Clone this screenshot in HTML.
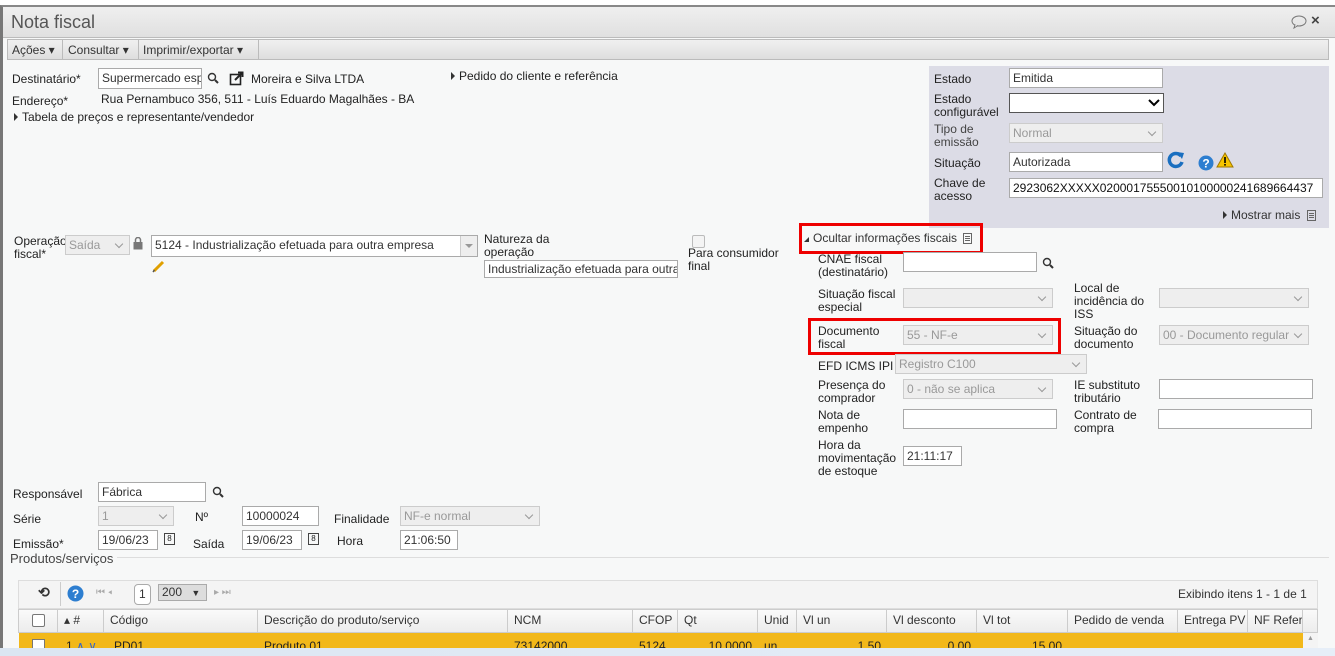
<!DOCTYPE html>
<html><head><meta charset="utf-8"><style>
*{box-sizing:border-box}
body{margin:0;width:1335px;height:656px;overflow:hidden;background:#fff;font-family:"Liberation Sans",sans-serif;font-size:12px;color:#222;position:relative}
.a{position:absolute;white-space:nowrap}
.in{position:absolute;height:20px;border:1px solid #aaa;background:#fff;padding:1px 3px;font-size:12px;line-height:16px;white-space:nowrap;overflow:hidden;color:#333}
.dis{background:#eee;border-color:#ccc;color:#999}
.sel::after{content:"";position:absolute;right:7px;top:5px;width:5px;height:5px;border-right:1.5px solid #999;border-bottom:1.5px solid #999;transform:rotate(45deg)}
.lbl{position:absolute;line-height:13px;color:#222}
.tri{display:inline-block;width:0;height:0;border-left:4px solid #333;border-top:4px solid transparent;border-bottom:4px solid transparent;margin-right:4px}
.red{position:absolute;border:3px solid #e00}
.th{position:absolute;top:609px;height:23px;border-right:1px solid #ccc;line-height:23px;padding-left:6px;color:#333;white-space:nowrap;overflow:hidden}
.td{position:absolute;top:633px;height:15px;line-height:26px;padding:0 6px;color:#222;overflow:hidden;white-space:nowrap}
.doc{display:inline-block;width:9px;height:11px;border:1px solid #666;vertical-align:-2px;margin-left:3px;background:linear-gradient(#666,#666) 1px 2px/5px 1px no-repeat,linear-gradient(#666,#666) 1px 4px/5px 1px no-repeat,linear-gradient(#666,#666) 1px 6px/5px 1px no-repeat}
</style></head><body>
<div class="a" style="left:0;top:5px;width:1335px;height:651px;border-left:3px solid #777;border-top:2px solid #888;background:#f7f8f8"></div>
<div class="a" style="left:3px;top:7px;width:1332px;height:31px;background:linear-gradient(#efefef,#e0e0e0);border-bottom:1px solid #bbb"></div>
<div class="a" style="left:11px;top:12px;font-size:18px;color:#555">Nota fiscal</div>
<svg class="a" style="left:1290px;top:15px" width="18" height="14" viewBox="0 0 18 14"><ellipse cx="9" cy="6" rx="7" ry="5" fill="none" stroke="#777"/><path d="M5 10 L4 13 L8 10.5" fill="#fff" stroke="#777"/></svg>
<div class="a" style="left:1311px;top:12px;font-size:15px;font-weight:bold;color:#444">×</div>
<div class="a" style="left:7px;top:39px;width:1322px;height:21px;background:linear-gradient(#f0f0f0,#dedede);border:1px solid #bbb"></div>
<div class="a" style="left:12px;top:43px;color:#333">Ações ▾</div>
<div class="a" style="left:62px;top:40px;width:1px;height:19px;background:#bbb"></div>
<div class="a" style="left:68px;top:43px;color:#333">Consultar ▾</div>
<div class="a" style="left:138px;top:40px;width:1px;height:19px;background:#bbb"></div>
<div class="a" style="left:143px;top:43px;color:#333">Imprimir/exportar ▾</div>
<div class="a" style="left:258px;top:40px;width:1px;height:19px;background:#bbb"></div>
<div class="a" style="left:12px;top:72px">Destinatário*</div>
<div class="in" style="left:98px;top:68px;width:104px;height:21px">Supermercado esp</div>
<svg class="a" style="left:207px;top:72px" width="13" height="13"><circle cx="5" cy="5" r="3.5" fill="none" stroke="#333" stroke-width="1.4"/><path d="M8 8 L11 11" stroke="#333" stroke-width="2"/></svg>
<svg class="a" style="left:229px;top:71px" width="15" height="15"><rect x="1.5" y="3.5" width="10" height="10" fill="none" stroke="#222" stroke-width="1.6"/><path d="M6 9 L13 2 M9 1.5 H13.5 V6" stroke="#222" stroke-width="2" fill="none"/></svg>
<div class="a" style="left:251px;top:72px">Moreira e Silva LTDA</div>
<div class="a" style="left:451px;top:69px"><span class="tri"></span>Pedido do cliente e referência</div>
<div class="a" style="left:12px;top:94px">Endereço*</div>
<div class="a" style="left:101px;top:92px">Rua Pernambuco 356, 511 - Luís Eduardo Magalhães - BA</div>
<div class="a" style="left:14px;top:110px"><span class="tri"></span>Tabela de preços e representante/vendedor</div>
<div class="a" style="left:929px;top:66px;width:400px;height:162px;background:#dcdce6"></div>
<div class="a" style="left:934px;top:72px">Estado</div>
<div class="in" style="left:1009px;top:68px;width:154px">Emitida</div>
<div class="lbl" style="left:934px;top:93px">Estado<br>configurável</div>
<div class="in" style="left:1009px;top:93px;width:155px;border-color:#555"></div>
<svg class="a" style="left:1148px;top:99px" width="12" height="8"><path d="M1 1 L6 6 L11 1" stroke="#000" stroke-width="2" fill="none"/></svg>
<div class="lbl" style="left:934px;top:123px;color:#444">Tipo de<br>emissão</div>
<div class="in dis sel" style="left:1009px;top:123px;width:154px">Normal</div>
<div class="a" style="left:934px;top:156px">Situação</div>
<div class="in" style="left:1009px;top:152px;width:154px">Autorizada</div>
<svg class="a" style="left:1167px;top:151px" width="18" height="18" viewBox="0 0 18 18"><path d="M14 5 A6.5 6.5 0 1 0 15 11" stroke="#1a6fc0" stroke-width="3.5" fill="none"/><path d="M10 1 L17 2 L15 8Z" fill="#1a6fc0"/></svg>
<svg class="a" style="left:1198px;top:155px" width="16" height="16"><circle cx="8" cy="8" r="7.5" fill="#2d7ed0"/><text x="8" y="12.5" text-anchor="middle" font-size="12" font-weight="bold" fill="#fff" font-family="Liberation Sans">?</text></svg>
<svg class="a" style="left:1216px;top:152px" width="18" height="16"><path d="M9 1 L17 15 H1Z" fill="#f5c400" stroke="#a07800"/><rect x="8.2" y="5" width="1.6" height="6" fill="#000"/><rect x="8.2" y="12" width="1.6" height="1.6" fill="#000"/></svg>
<div class="lbl" style="left:934px;top:177px">Chave de<br>acesso</div>
<div class="in" style="left:1009px;top:178px;width:314px;color:#111">2923062XXXXX02000175550010100000241689664437</div>
<div class="a" style="left:1223px;top:208px;color:#333"><span class="tri"></span>Mostrar mais <span class="doc"></span></div>
<div class="lbl" style="left:14px;top:235px">Operação<br>fiscal*</div>
<div class="in dis sel" style="left:65px;top:235px;width:65px">Saída</div>
<svg class="a" style="left:133px;top:237px" width="10" height="13"><rect x="0.5" y="5" width="9" height="7.5" fill="#777"/><path d="M2.5 5 V3 A2.5 2.5 0 0 1 7.5 3 V5" stroke="#777" stroke-width="1.5" fill="none"/></svg>
<div class="in" style="left:151px;top:235px;width:327px;height:22px">5124 - Industrialização efetuada para outra empresa</div>
<div class="a" style="left:460px;top:236px;width:17px;height:20px;background:#eee;border-left:1px solid #ccc"></div>
<div class="a" style="left:465px;top:244px;border-left:4px solid transparent;border-right:4px solid transparent;border-top:4px solid #999"></div>
<svg class="a" style="left:152px;top:259px" width="14" height="14"><path d="M2 12 L11 3" stroke="#e0a000" stroke-width="3"/><path d="M1 13 L2.5 11" stroke="#555" stroke-width="1.5"/></svg>
<div class="lbl" style="left:484px;top:233px">Natureza da<br>operação</div>
<div class="in" style="left:484px;top:260px;width:194px;height:18px;line-height:14px">Industrialização efetuada para outra</div>
<div class="a" style="left:692px;top:235px;width:13px;height:13px;border:1px solid #bbb;border-radius:2px;background:#f4f4f4"></div>
<div class="lbl" style="left:688px;top:247px">Para consumidor<br>final</div>
<div class="a" style="left:804px;top:231px;color:#333"><span style="display:inline-block;border-left:5px solid transparent;border-bottom:5px solid #333;margin-right:4px"></span>Ocultar informações fiscais <span class="doc"></span></div>
<div class="red" style="left:799px;top:223px;width:184px;height:31px"></div>
<div class="lbl" style="left:818px;top:253px">CNAE fiscal<br>(destinatário)</div>
<div class="in" style="left:903px;top:252px;width:134px"></div>
<svg class="a" style="left:1042px;top:257px" width="13" height="13"><circle cx="5" cy="5" r="3.5" fill="none" stroke="#333" stroke-width="1.4"/><path d="M8 8 L11 11" stroke="#333" stroke-width="2"/></svg>
<div class="lbl" style="left:818px;top:288px">Situação fiscal<br>especial</div>
<div class="in dis sel" style="left:903px;top:288px;width:150px"></div>
<div class="lbl" style="left:1074px;top:282px">Local de<br>incidência do<br>ISS</div>
<div class="in dis sel" style="left:1159px;top:288px;width:150px"></div>
<div class="lbl" style="left:818px;top:325px">Documento<br>fiscal</div>
<div class="in dis sel" style="left:903px;top:325px;width:150px">55 - NF-e</div>
<div class="red" style="left:808px;top:318px;width:253px;height:37px"></div>
<div class="lbl" style="left:1074px;top:325px">Situação do<br>documento</div>
<div class="in dis sel" style="left:1159px;top:325px;width:150px">00 - Documento regular</div>
<div class="a" style="left:818px;top:359px">EFD ICMS IPI</div>
<div class="in dis sel" style="left:895px;top:354px;width:192px">Registro C100</div>
<div class="lbl" style="left:818px;top:379px">Presença do<br>comprador</div>
<div class="in dis sel" style="left:903px;top:379px;width:150px">0 - não se aplica</div>
<div class="lbl" style="left:1074px;top:379px">IE substituto<br>tributário</div>
<div class="in" style="left:1159px;top:379px;width:154px"></div>
<div class="lbl" style="left:818px;top:409px">Nota de<br>empenho</div>
<div class="in" style="left:903px;top:409px;width:154px"></div>
<div class="lbl" style="left:1074px;top:409px">Contrato de<br>compra</div>
<div class="in" style="left:1158px;top:409px;width:154px"></div>
<div class="lbl" style="left:818px;top:439px">Hora da<br>movimentação<br>de estoque</div>
<div class="in" style="left:903px;top:446px;width:59px">21:11:17</div>
<div class="a" style="left:13px;top:487px">Responsável</div>
<div class="in" style="left:98px;top:482px;width:108px">Fábrica</div>
<svg class="a" style="left:212px;top:486px" width="13" height="13"><circle cx="5" cy="5" r="3.5" fill="none" stroke="#333" stroke-width="1.4"/><path d="M8 8 L11 11" stroke="#333" stroke-width="2"/></svg>
<div class="a" style="left:13px;top:512px">Série</div>
<div class="in dis sel" style="left:98px;top:506px;width:76px">1</div>
<div class="a" style="left:195px;top:510px">Nº</div>
<div class="in" style="left:242px;top:506px;width:77px">10000024</div>
<div class="a" style="left:334px;top:512px">Finalidade</div>
<div class="in dis sel" style="left:400px;top:506px;width:140px">NF-e normal</div>
<div class="a" style="left:13px;top:537px">Emissão*</div>
<div class="in" style="left:98px;top:530px;width:60px">19/06/23</div>
<div class="a" style="left:164px;top:533px;width:11px;height:12px;border:1.5px solid #444;font-size:8px;line-height:9px;text-align:center">8</div>
<div class="a" style="left:193px;top:537px">Saída</div>
<div class="in" style="left:242px;top:530px;width:60px">19/06/23</div>
<div class="a" style="left:308px;top:533px;width:11px;height:12px;border:1.5px solid #444;font-size:8px;line-height:9px;text-align:center">8</div>
<div class="a" style="left:337px;top:534px">Hora</div>
<div class="in" style="left:400px;top:530px;width:58px">21:06:50</div>
<div class="a" style="left:10px;top:557px;width:1319px;height:1px;background:#ddd"></div>
<div class="a" style="left:10px;top:551px;font-size:13px;color:#444;background:#f7f8f8;padding-right:4px">Produtos/serviços</div>
<div class="a" style="left:18px;top:580px;width:1300px;height:29px;background:#f4f4f4;border:1px solid #ddd"></div>
<div class="a" style="left:38px;top:584px;font-size:14px;font-weight:bold;color:#333">⟲</div>
<div class="a" style="left:60px;top:582px;width:1px;height:24px;background:#ccc"></div>
<svg class="a" style="left:67px;top:585px" width="17" height="17"><circle cx="8.5" cy="8.5" r="8" fill="#2d7ed0"/><text x="8.5" y="13" text-anchor="middle" font-size="12" font-weight="bold" fill="#fff" font-family="Liberation Sans">?</text></svg>
<div class="a" style="left:96px;top:587px;color:#aaa;font-size:10px">⏮ ◂</div>
<div class="in" style="left:134px;top:584px;width:17px;height:21px;border-radius:4px;padding:1px 4px">1</div>
<div class="in" style="left:158px;top:584px;width:49px;height:17px;line-height:13px;background:#ddd;border-color:#aaa">200 <span style="font-size:9px;margin-left:6px">▼</span></div>
<div class="a" style="left:214px;top:587px;color:#aaa;font-size:10px">▸ ⏭</div>
<div class="a" style="left:1178px;top:587px;color:#333">Exibindo itens 1 - 1 de 1</div>
<div class="a" style="left:18px;top:609px;width:1300px;height:24px;background:linear-gradient(#fafafa,#ececec);border:1px solid #ccc"></div>
<div class="a" style="left:32px;top:614px;width:13px;height:13px;border:1px solid #777;border-radius:2px;background:#fff"></div>
<div class="th" style="left:19px;width:39px"></div>
<div class="th" style="left:58px;width:46px">▴ #</div>
<div class="th" style="left:104px;width:154px">Código</div>
<div class="th" style="left:258px;width:250px">Descrição do produto/serviço</div>
<div class="th" style="left:508px;width:125px">NCM</div>
<div class="th" style="left:633px;width:45px">CFOP</div>
<div class="th" style="left:678px;width:80px">Qt</div>
<div class="th" style="left:758px;width:39px">Unid</div>
<div class="th" style="left:797px;width:90px">Vl un</div>
<div class="th" style="left:887px;width:90px">Vl desconto</div>
<div class="th" style="left:977px;width:91px">Vl tot</div>
<div class="th" style="left:1068px;width:110px">Pedido de venda</div>
<div class="th" style="left:1178px;width:70px">Entrega PV</div>
<div class="th" style="left:1248px;width:55px">NF Refer</div>
<div class="a" style="left:19px;top:633px;width:1284px;height:15px;background:#f2b81a"></div>
<div class="a" style="left:1303px;top:633px;width:15px;height:15px;background:#f4f4f4;font-size:7px;color:#999;text-align:center;line-height:12px">▲</div>
<div class="a" style="left:32px;top:639px;width:13px;height:9px;border:1px solid #777;border-bottom:none;background:#fff"></div>
<div class="td" style="left:60px">1 <span style="color:#36c">∧ ∨</span></div>
<div class="td" style="left:108px">PD01</div>
<div class="td" style="left:258px">Produto 01</div>
<div class="td" style="left:508px">73142000</div>
<div class="td" style="left:633px">5124</div>
<div class="td" style="left:678px;width:80px;text-align:right">10,0000</div>
<div class="td" style="left:758px">un</div>
<div class="td" style="left:797px;width:90px;text-align:right">1,50</div>
<div class="td" style="left:887px;width:90px;text-align:right">0,00</div>
<div class="td" style="left:977px;width:91px;text-align:right">15,00</div>
<div class="a" style="left:0;top:648px;width:1335px;height:8px;background:linear-gradient(90deg,#dbe6f2,#e6eef8)"></div>
</body></html>
